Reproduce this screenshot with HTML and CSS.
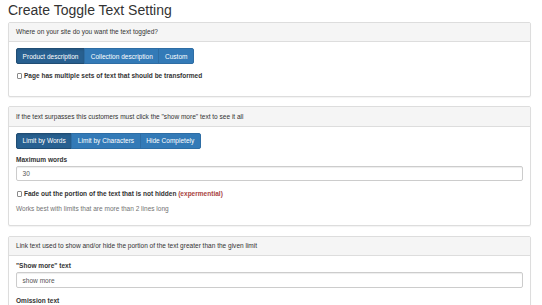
FILE: index.html
```html
<!DOCTYPE html>
<html>
<head>
<meta charset="utf-8">
<link rel="stylesheet" href="styles.css">
</head>
<body>
<div class="page">
  <h2 class="title">Create Toggle Text Setting</h2>

  <section class="panel">
    <div class="panel-heading">Where on your site do you want the text toggled?</div>
    <div class="panel-body">
      <div class="btn-group">
        <button class="btn active">Product description</button>
        <button class="btn">Collection description</button>
        <button class="btn">Custom</button>
      </div>
      <label class="check check-first"><input type="checkbox" class="cb"><span>Page has multiple sets of text that should be transformed</span></label>
    </div>
  </section>

  <section class="panel">
    <div class="panel-heading">If the text surpasses this customers must click the "show more" text to see it all</div>
    <div class="panel-body">
      <div class="btn-group">
        <button class="btn active">Limit by Words</button>
        <button class="btn">Limit by Characters</button>
        <button class="btn">Hide Completely</button>
      </div>
      <label class="field-label after-btns">Maximum words</label>
      <div class="input">30</div>
      <label class="check check-second"><input type="checkbox" class="cb"><span>Fade out the portion of the text that is not hidden <em class="danger">(expermential)</em></span></label>
      <p class="help">Works best with limits that are more than 2 lines long</p>
    </div>
  </section>

  <section class="panel">
    <div class="panel-heading">Link text used to show and/or hide the portion of the text greater than the given limit</div>
    <div class="panel-body panel-body-tight">
      <label class="field-label">"Show more" text</label>
      <div class="input">show more</div>
      <label class="field-label spaced">Omission text</label>
    </div>
  </section>
</div>
</body>
</html>
```

FILE: styles.css
```css
html, body {
  margin: 0;
  padding: 0;
  background: #fff;
}

body {
  font-family: "Liberation Sans", Arial, Helvetica, sans-serif;
  font-size: 6.54px;
  line-height: 9.3px;
  color: #333;
}

.page {
  display: flex;
  flex-direction: column;
  padding: 0 11px 0 8px;
}

.title {
  font-size: 14px;
  line-height: 15.4px;
  font-weight: 500;
  margin: 2.5px 0 4px 0;
  color: #333;
}

.panel {
  border: 1px solid #ddd;
  border-radius: 2px;
  background: #fff;
  box-shadow: 0 1px 1px rgba(0, 0, 0, 0.05);
  margin-bottom: 9.5px;
  overflow: hidden;
}

.panel-heading {
  background: #f5f5f5;
  border-bottom: 1px solid #ddd;
  padding: 4.5px 7px;
  color: #333;
}

.panel-body {
  display: flex;
  flex-direction: column;
  align-items: stretch;
  padding: 6px 7px 7px;
}

.panel-body-tight {
  padding-top: 5px;
}

.btn-group {
  display: flex;
  align-self: flex-start;
}

.btn {
  font-family: inherit;
  font-size: 6.54px;
  line-height: 9.3px;
  padding: 2.3px 5.6px;
  margin: 0;
  color: #fff;
  background: #337ab7;
  border: 1px solid #2e6da4;
  border-radius: 0;
  cursor: pointer;
}

.btn + .btn {
  margin-left: -1px;
}

.btn:first-child {
  border-radius: 2px 0 0 2px;
}

.btn:last-child {
  border-radius: 0 2px 2px 0;
}

.btn.active {
  background: #286090;
  border-color: #204d74;
  box-shadow: inset 0 1px 2px rgba(0, 0, 0, 0.125);
}

.check {
  display: flex;
  align-items: center;
  font-weight: bold;
}

.check-first {
  margin: 7.2px 0 8.3px;
}

.check-second {
  margin-top: 8px;
}

.cb {
  appearance: none;
  -webkit-appearance: none;
  width: 5.5px;
  height: 5.5px;
  margin: 0 1.8px 0 0.7px;
  border: 1px solid #8a8a8a;
  border-radius: 1px;
  background: #fff;
  box-sizing: border-box;
  flex: none;
}

.danger {
  font-style: normal;
  color: #a94442;
}

.field-label {
  display: block;
  font-weight: bold;
  margin-bottom: 2px;
}

.after-btns {
  margin-top: 6px;
}

.spaced {
  margin-top: 7.7px;
}

.input {
  height: 15.5px;
  box-sizing: border-box;
  border: 1px solid #ccc;
  border-radius: 2px;
  padding: 2.1px 5.6px;
  color: #555;
  background: #fff;
  box-shadow: inset 0 1px 1px rgba(0, 0, 0, 0.075);
  margin-right: 0;
}

.help {
  margin: 5.4px 0 5px;
  color: #737373;
}
```
